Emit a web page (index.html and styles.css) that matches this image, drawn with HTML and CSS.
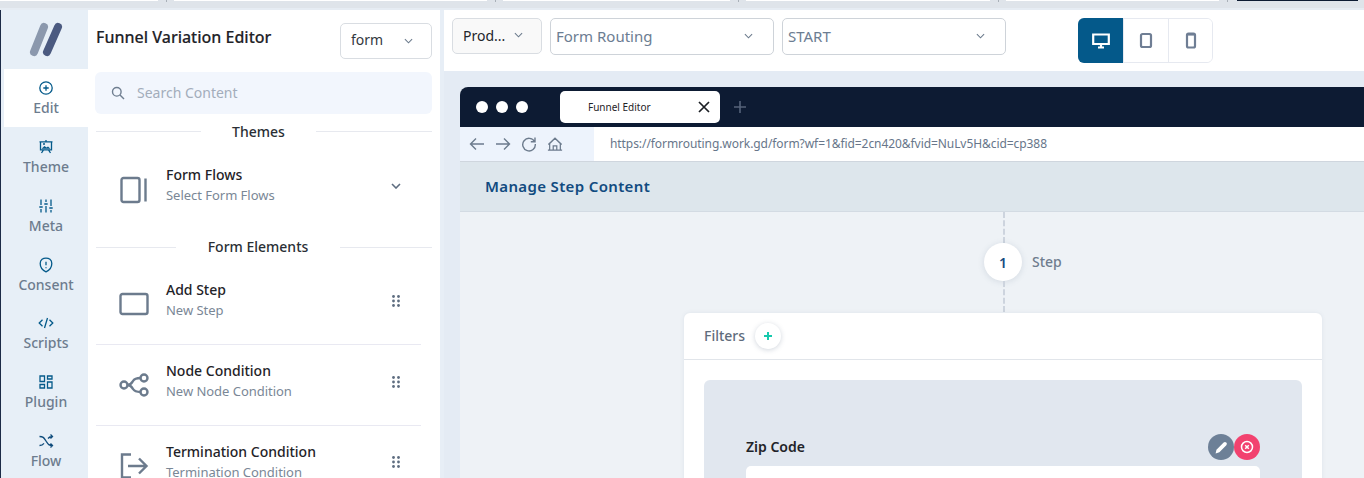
FILE: index.html
```html
<!DOCTYPE html>
<html lang="en">
<head>
<meta charset="utf-8">
<title>Funnel Variation Editor</title>
<link rel="stylesheet" href="styles.css">
</head>
<body>
<div class="app">
  <div class="tabstrip">
    <i class="seg seg-a"></i><i class="tick"></i>
    <i class="seg seg-b"></i><i class="tick"></i>
    <i class="seg seg-c"></i><i class="tick"></i>
    <i class="seg seg-d"></i><i class="tick"></i>
    <i class="seg seg-e"></i><i class="tick"></i>
    <i class="seg-dark"></i>
  </div>
  <div class="workspace">
    <nav class="rail">
      <div class="logo">
        <svg width="40" height="40" viewBox="0 0 40 40"><path d="M18 5 8 30" class="logo-a"/><path d="M32 5 21 30" class="logo-b"/></svg>
      </div>
      <a class="rail-item active">
        <svg class="rail-icon" viewBox="0 0 16 16"><circle cx="8" cy="8" r="6.200" class="st-blue"/><path d="M8 5.300v5.400M5.300 8h5.400" class="st-blue"/></svg>
        <span>Edit</span>
      </a>
      <a class="rail-item">
        <svg class="rail-icon" viewBox="0 0 16 16"><path d="M8 1v1.500M2.500 2.800h11v8h-11zM1.500 2.800h13M5.500 10.800 3.500 14M10.500 10.800l2 3.200" class="st-blue"/><path d="M3.500 9.800 6.500 7l2 1.500 1.500-1 2.500 2.300z" class="fl-blue"/><circle cx="6" cy="5" r="1" class="fl-blue"/></svg>
        <span>Theme</span>
      </a>
      <a class="rail-item">
        <svg class="rail-icon" viewBox="0 0 16 16"><path d="M3 1.500v5.500M3 11v3.500M8 1.500V4M8 8v6.500M13 1.500V8M13 12v2.500M1.300 9h3.400M6.300 6h3.400M11.300 10h3.400" class="st-blue"/></svg>
        <span>Meta</span>
      </a>
      <a class="rail-item">
        <svg class="rail-icon" viewBox="0 0 16 16"><path d="M8 1.200c2.800 0 5.800 1.300 5.800 5.300 0 4-2.800 7-5.800 8.300-3-1.300-5.800-4.300-5.800-8.300 0-4 3-5.300 5.800-5.300z" class="st-blue"/><path d="M8 4.800v3.400M8 10.200v1" class="st-blue"/></svg>
        <span>Consent</span>
      </a>
      <a class="rail-item">
        <svg class="rail-icon" viewBox="0 0 16 16"><path d="M4.500 4.800 1.200 8l3.300 3.200M11.500 4.800 14.800 8l-3.300 3.200M9.500 3l-3 10" class="st-blue"/></svg>
        <span>Scripts</span>
      </a>
      <a class="rail-item">
        <svg class="rail-icon" viewBox="0 0 16 16"><path d="M2 2h4.500v5.500H2zM9.500 2H14v3H9.500zM2 10.500h4.500V14H2zM9.500 8H14v6H9.500z" class="st-blue"/></svg>
        <span>Plugin</span>
      </a>
      <a class="rail-item">
        <svg class="rail-icon" viewBox="0 0 16 16"><path d="M1.500 3.500c4 0 4.500 1.500 6.500 4.500s2.500 4.500 6.500 4.500M1.500 12.500c2.500 0 3.500-.8 4.500-2.200M10 5.500c1-1.300 2-2 4.500-2M12.500 1.500l2 2-2 2M12.500 10.500l2 2-2 2" class="st-dark"/></svg>
        <span>Flow</span>
      </a>
    </nav>

    <aside class="panel">
      <header class="panel-head">
        <h1>Funnel Variation Editor</h1>
        <div class="select select-form">
          <span>form</span>
          <svg class="chev" viewBox="0 0 10 6"><path d="M1 1l4 4 4-4"/></svg>
        </div>
      </header>
      <div class="search">
        <svg class="search-icon" viewBox="0 0 14 14"><circle cx="5.800" cy="5.800" r="4.300"/><path d="M9 9l4 4"/></svg>
        <span>Search Content</span>
      </div>
      <div class="divider divider-themes"><i></i><span>Themes</span><i></i></div>
      <div class="tool tool-flows">
        <svg class="tool-icon" viewBox="0 0 30 28"><rect x="2.500" y="2" width="18" height="24" rx="2"/><path d="M26.500 2.500v23"/></svg>
        <div class="tool-text"><b>Form Flows</b><small>Select Form Flows</small></div>
        <svg class="flow-chev" viewBox="0 0 10 6"><path d="M1 1l4 4 4-4"/></svg>
      </div>
      <div class="divider divider-elements"><i></i><span>Form Elements</span><i></i></div>
      <div class="tool tool-step">
        <svg class="tool-icon" viewBox="0 0 30 28"><rect x="1.500" y="4" width="27" height="20" rx="2"/></svg>
        <div class="tool-text"><b>Add Step</b><small>New Step</small></div>
        <svg class="handle" viewBox="0 0 8 12"><circle cx="1.500" cy="1.500" r="1.400"/><circle cx="6.500" cy="1.500" r="1.400"/><circle cx="1.500" cy="6" r="1.400"/><circle cx="6.500" cy="6" r="1.400"/><circle cx="1.500" cy="10.500" r="1.400"/><circle cx="6.500" cy="10.500" r="1.400"/></svg>
      </div>
      <div class="tool tool-node">
        <svg class="tool-icon" viewBox="0 0 30 28"><circle cx="5" cy="14" r="3.500"/><circle cx="25" cy="7" r="3.500"/><circle cx="25" cy="21" r="3.500"/><path d="M8.500 14c3.500 0 4-1.500 5.500-4s3-3 7.500-3M8.500 14c3.500 0 4 1.500 5.500 4s3 3 7.500 3"/></svg>
        <div class="tool-text"><b>Node Condition</b><small>New Node Condition</small></div>
        <svg class="handle" viewBox="0 0 8 12"><circle cx="1.500" cy="1.500" r="1.400"/><circle cx="6.500" cy="1.500" r="1.400"/><circle cx="1.500" cy="6" r="1.400"/><circle cx="6.500" cy="6" r="1.400"/><circle cx="1.500" cy="10.500" r="1.400"/><circle cx="6.500" cy="10.500" r="1.400"/></svg>
      </div>
      <div class="tool tool-term">
        <svg class="tool-icon" viewBox="0 0 30 28"><path d="M12 2.500H3v23h9M9 14h18.500M20 6.500l7.500 7.500-7.500 7.500"/></svg>
        <div class="tool-text"><b>Termination Condition</b><small>Termination Condition</small></div>
        <svg class="handle" viewBox="0 0 8 12"><circle cx="1.500" cy="1.500" r="1.400"/><circle cx="6.500" cy="1.500" r="1.400"/><circle cx="1.500" cy="6" r="1.400"/><circle cx="6.500" cy="6" r="1.400"/><circle cx="1.500" cy="10.500" r="1.400"/><circle cx="6.500" cy="10.500" r="1.400"/></svg>
      </div>
    </aside>

    <main class="main">
      <div class="topbar">
        <div class="select select-prod">
          <span>Prod...</span>
          <svg class="chev" viewBox="0 0 10 6"><path d="M1 1l4 4 4-4"/></svg>
        </div>
        <div class="select select-wide">
          <span>Form Routing</span>
          <svg class="chev" viewBox="0 0 10 6"><path d="M1 1l4 4 4-4"/></svg>
        </div>
        <div class="select select-wide select-start">
          <span>START</span>
          <svg class="chev" viewBox="0 0 10 6"><path d="M1 1l4 4 4-4"/></svg>
        </div>
        <div class="devices">
          <button class="device on"><svg viewBox="0 0 18 16"><path d="M1.200 1.500h15.600v9.500H1.200zM6 14.500h6M9 11v3.500"/></svg></button>
          <button class="device"><svg viewBox="0 0 18 18"><rect x="4" y="2" width="10" height="13" rx="1.500"/></svg></button>
          <button class="device"><svg viewBox="0 0 18 18"><rect x="5" y="1.500" width="8" height="14" rx="1.500"/><path d="M6 2.500h6"/></svg></button>
        </div>
      </div>
      <div class="canvas">
        <div class="browser">
          <div class="chrome">
            <div class="dots"><i></i><i></i><i></i></div>
            <div class="tab">
              <span>Funnel Editor</span>
              <svg viewBox="0 0 12 12"><path d="M1 1l10 10M11 1 1 11"/></svg>
            </div>
            <svg class="newtab" viewBox="0 0 12 12"><path d="M6 0v12M0 6h12"/></svg>
          </div>
          <div class="address">
            <div class="nav-buttons">
              <svg viewBox="0 0 16 16"><path d="M15 8H1.500M7 2.500 1.500 8 7 13.500"/></svg>
              <svg viewBox="0 0 16 16"><path d="M1 8h13.500M9 2.500 14.500 8 9 13.500"/></svg>
              <svg viewBox="0 0 16 16"><path d="M13.500 5.500A6.300 6.300 0 1 0 14.300 8M14 1.500v4.200H9.800"/></svg>
              <svg viewBox="0 0 18 16"><path d="M1 15h16M3 15V7.500L9 1.500l6 6V15M1.500 8.500 9 1.500l7.500 7M7 15v-5h4v5"/></svg>
            </div>
            <div class="url">https://formrouting.work.gd/form?wf=1&amp;fid=2cn420&amp;fvid=NuLv5H&amp;cid=cp388</div>
          </div>
          <div class="manage">Manage Step Content</div>
          <div class="stage">
            <div class="dash"></div>
            <div class="step">
              <span class="step-spacer"></span>
              <div class="step-num">1</div>
              <span class="step-label">Step</span>
            </div>
            <div class="dash"></div>
            <section class="card">
              <div class="card-head">
                <span class="card-title">Filters</span>
                <span class="add"><svg viewBox="0 0 10 10"><path d="M5 1v8M1 5h8"/></svg></span>
              </div>
              <div class="card-body">
                <div class="filter">
                  <div class="field-head">
                    <label>Zip Code</label>
                    <div class="field-actions">
                      <span class="round round-edit"><svg viewBox="0 0 14 14"><path d="M1.500 12.500l.8-3.400 6.700-6.700a1.600 1.600 0 0 1 2.500 2.400L5 11.500z"/></svg></span>
                      <span class="round round-del"><svg viewBox="0 0 14 14"><circle cx="7" cy="7" r="5.500"/><path d="M5.200 5.200l3.600 3.600M8.800 5.200l-3.600 3.600"/></svg></span>
                    </div>
                  </div>
                  <div class="field-input"></div>
                </div>
              </div>
            </section>
          </div>
        </div>
      </div>
    </main>
  </div>
</div>
</body>
</html>
```
FILE: styles.css
```css
* { box-sizing: border-box; }
html, body { margin: 0; height: 100%; overflow: hidden; }
body { font-family: "Noto Sans", "Open Sans", sans-serif; background: #e7eef6; color: #1f2328; }
svg { display: block; fill: none; }

.app { width: 1364px; height: 478px; display: flex; flex-direction: column; overflow: hidden; }

/* fragment of the page above */
.tabstrip { height: 10px; flex: none; display: flex; background: linear-gradient(#dfe4ea 0 8px, #e6ecf3 8px); }
.seg { height: 1px; background: #fff; }
.seg-a { width: 158px; }
.seg-b { width: 313px; }
.seg-c { width: 227px; }
.seg-d { width: 244px; }
.seg-e { width: 213px; }
.tick { width: 16px; height: 2px; }
.tick::after { content: ""; display: block; width: 1px; height: 2px; margin: 0 auto; background: #a9b0b8; }
.seg-dark { width: 121px; height: 1px; margin-left: 2px; background: #0d1b33; }

.workspace { flex: 1; min-height: 0; display: flex; overflow: hidden; }

/* rail */
.rail { width: 88px; flex: none; background: #e7eff7; border-left: 1px solid #1c2b47; padding-left: 3px; display: flex; flex-direction: column; overflow: hidden; }
.logo { height: 59.200px; flex: none; padding: 12px 0 0 22px; }
.logo svg { stroke-linecap: round; stroke-width: 8; }
.logo-a { stroke: #8b98ad; }
.logo-b { stroke: #4b5a80; }
.rail-item { height: 58.800px; flex: none; display: flex; flex-direction: column; align-items: center; padding-top: 11px; color: #6d7c8e; font-size: 14px; font-weight: 500; line-height: 20px; }
.rail-item.active { background: #fff; height: 58px; margin-bottom: .8px; }
.rail-icon { width: 16px; height: 16px; margin-bottom: 2px; }
.st-blue { stroke: #045a8a; stroke-width: 1.300; }
.st-dark { stroke: #0f4c7c; stroke-width: 1.300; }
.fl-blue { fill: #045a8a; }

/* left panel */
.panel { width: 352px; flex: none; background: #fff; display: flex; flex-direction: column; padding: 0 8px; overflow: hidden; }
.panel-head { height: 62px; flex: none; display: flex; align-items: flex-start; justify-content: space-between; }
.panel-head h1 { margin: 16px 0 0; font-size: 16px; font-weight: 500; -webkit-text-stroke: .15px #1f2328; line-height: 22px; }
.select { display: flex; align-items: center; justify-content: space-between; border: 1px solid #d9dde2; border-radius: 5px; background: #fff; font-size: 14px; }
.select-form { width: 92px; height: 36px; margin-top: 13px; padding: 0 18px 3px 10px; color: #33383e; }
.select-form .chev { margin-top: 3px; }
.chev { width: 9px; height: 6px; stroke: #6b7a8c; stroke-width: 1.200; }
.search { width: 337px; height: 42px; flex: none; margin-left: -1px; background: #f2f6fd; border-radius: 6px; display: flex; align-items: center; padding-left: 16px; gap: 12px; font-size: 14px; color: #a3adbb; }
.search span { padding-bottom: 2px; }
.search-icon { width: 14px; height: 14px; stroke: #6f7e90; stroke-width: 1.400; }
.divider { display: flex; flex: none; align-items: center; font-size: 14px; font-weight: 500; color: #2a2f35; height: 20px; }
.divider i { height: 1px; background: #e7e9ef; margin-top: -2px; }
.divider-themes { margin-top: 8px; }
.divider-themes i:first-child { width: 105px; }
.divider-themes span { width: 115px; text-align: center; padding-bottom: 2px; }
.divider-themes i:last-child { width: 116px; }
.divider-elements i:first-child { width: 80px; }
.divider-elements span { width: 164px; text-align: center; padding-bottom: 4px; }
.divider-elements i:last-child { width: 92px; }

.tool { display: flex; flex: none; align-items: center; width: 325px; padding-left: 23px; }
.tool-icon { width: 30px; height: 28px; stroke: #6c7b8d; stroke-width: 2.400; flex: none; }
.tool-text { margin-left: 17px; flex: 1; display: flex; flex-direction: column; padding-bottom: 8px; }
.tool-text b { font-size: 14px; font-weight: 500; line-height: 20px; color: #1f2328; }
.tool-text small { font-size: 13px; line-height: 20px; color: #7a8796; letter-spacing: -.03px; }
.handle { width: 8px; height: 12px; fill: #5e6d80; margin: 0 21px 6px 0; flex: none; }
.flow-chev { width: 10px; height: 6px; stroke: #5e6d80; stroke-width: 1.600; margin: 0 20px 8px 0; flex: none; }
.tool-flows { height: 96px; }
.tool-flows .tool-icon { margin-bottom: 1px; }
.tool-flows .tool-text { padding-bottom: 11px; }
.tool-step { height: 87px; padding-top: 6px; border-bottom: 1px solid #e9e9f2; }
.tool-node { height: 81px; border-bottom: 1px solid #e9e9f2; }
.tool-term { height: 81px; padding-bottom: 2px; }
.tool-term .handle { margin-bottom: 7px; }

/* main */
.main { flex: 1; min-width: 0; margin-left: 4px; display: flex; flex-direction: column; }
.topbar { height: 61px; flex: none; background: #fff; display: flex; align-items: flex-start; gap: 8px; padding: 8px 8px 0; }
.select-prod { width: 90px; height: 36px; background: #f9f9f9; padding: 0 18px 2px 10px; color: #22262b; }
.select-wide { width: 224px; height: 37px; padding: 0 20px 2px 5px; font-size: 15px; color: #6c7d92; border-color: #ced3d9; }
.devices { margin-left: 64px; display: flex; flex: none; height: 45px; border: 1px solid #e6e9f0; border-radius: 6px; }
.device { width: 45px; padding: 0; border: 0; border-left: 1px solid #e6e9f0; background: #fff; display: flex; align-items: center; justify-content: center; }
.device:first-child { border-left: 0; }
.device:last-child { width: 44px; border-radius: 0 5px 5px 0; }
.device.on { background: #04598a; margin: -1px 0 -1px -1px; height: 45px; border-radius: 6px 0 0 6px; }
.device svg { width: 18px; height: 18px; stroke: #6f7e94; stroke-width: 2.200; }
.device.on svg { stroke: #fff; }

.canvas { flex: 1; min-height: 0; background: #e4ebf4; padding: 16px 0 0 16px; overflow: hidden; }
.browser { width: 1086px; height: 600px; border-radius: 8px 8px 0 0; overflow: hidden; background: #eef2f6; }
.chrome { height: 40px; background: #0d1b33; display: flex; align-items: center; }
.dots { display: flex; gap: 8px; padding-left: 16px; width: 100px; }
.dots i { width: 12px; height: 12px; border-radius: 50%; background: #fff; }
.tab { width: 160px; height: 32px; background: #fff; border-radius: 5px; display: flex; align-items: center; justify-content: space-between; padding: 0 10px 0 28px; font-size: 10px; color: #1f2328; }
.tab svg { width: 12px; height: 12px; stroke: #1b1f24; stroke-width: 1.700; }
.newtab { width: 12px; height: 12px; stroke: #55637a; stroke-width: 1.600; margin-left: 14px; }
.address { height: 35px; display: flex; background: #fff; border-bottom: 1px solid #cfd6de; }
.nav-buttons { width: 134px; background: #edf3fc; display: flex; align-items: center; gap: 10px; padding-left: 9px; }
.nav-buttons svg { width: 16px; height: 16px; stroke: #6c7b8d; stroke-width: 1.400; flex: none; }
.url { padding-left: 16px; line-height: 33px; font-size: 12px; color: #67768a; letter-spacing: -.07px; }
.manage { height: 50px; background: #dde6ec; border-bottom: 1px solid #d3dbe3; padding-left: 25px; font-size: 15px; font-weight: 600; line-height: 48px; color: #114b80; letter-spacing: .35px; }
.stage { display: flex; flex-direction: column; align-items: center; background: #eef2f6; }
.dash { width: 0; height: 31px; flex: none; margin-left: 2px; border-left: 2px dashed #cdd4de; }
.step { width: 100%; display: grid; grid-template-columns: 1fr 38px 1fr; align-items: center; height: 38px; }
.step-num { width: 38px; height: 38px; border-radius: 50%; background: #fff; box-shadow: 0 1px 6px rgba(90,110,140,.18); display: flex; align-items: center; justify-content: center; font-size: 14px; font-weight: 600; color: #174b80; }
.step-label { padding: 0 0 2px 10px; font-size: 14px; font-weight: 500; color: #6f7d8e; }
.card { width: 638px; margin-top: 1px; background: #fff; border-radius: 6px; box-shadow: 0 0 4px rgba(90,110,140,.1); }
.card-head { height: 47px; border-bottom: 1px solid #e1e5ea; display: flex; align-items: center; gap: 10px; padding: 0 20px; font-size: 14px; font-weight: 500; color: #5f6c7c; }
.card-title { padding-bottom: 2px; }
.add { width: 26px; height: 26px; border-radius: 50%; background: #fff; box-shadow: 0 1px 5px rgba(70,90,120,.25); display: flex; align-items: center; justify-content: center; }
.add svg { width: 10px; height: 10px; stroke: #17c9ad; stroke-width: 2; }
.card-body { padding: 20px; }
.filter { background: #e1e7ef; border-radius: 6px; padding: 54px 42px 40px; }
.field-head { display: flex; align-items: center; justify-content: space-between; height: 26px; }
.field-head label { font-size: 14px; font-weight: 600; color: #1f2328; padding-bottom: 2px; }
.field-actions { display: flex; }
.round { width: 26px; height: 26px; border-radius: 50%; display: flex; align-items: center; justify-content: center; }
.round-edit { background: #6d8097; }
.round-edit svg { width: 15px; height: 15px; fill: #fff; }
.round-del { background: #f2426f; }
.round-del svg { width: 14px; height: 14px; stroke: #fff; stroke-width: 1.500; }
.field-input { height: 40px; margin-top: 6px; background: #fff; border-radius: 5px; }
```
